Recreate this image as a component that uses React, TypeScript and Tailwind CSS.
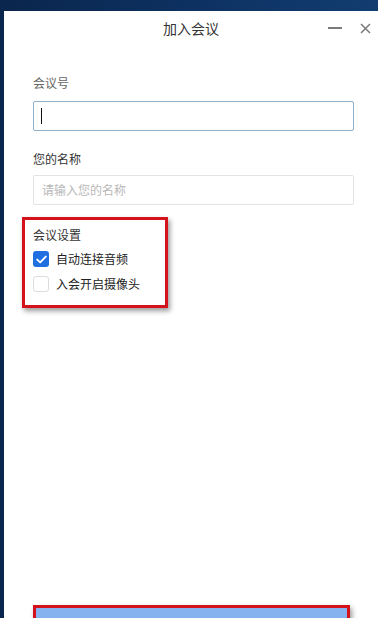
import React from "react";

const font = { fontFamily: '"Noto Sans CJK SC", "Noto Sans", sans-serif' };

function Check({ checked }: { checked: boolean }) {
  if (checked) {
    return (
      <div className="w-[16px] h-[16px] rounded-[3px] bg-[#1f6fe0] flex items-center justify-center shrink-0">
        <svg width="11" height="9" viewBox="0 0 11 9">
          <path d="M1.2 4.6 L4.2 7.4 L9.8 1.6" fill="none" stroke="#fff" strokeWidth="1.9" strokeLinecap="round" strokeLinejoin="round" />
        </svg>
      </div>
    );
  }
  return <div className="w-[16px] h-[16px] rounded-[3px] border border-[#dcdcdc] bg-white shrink-0" />;
}

export default function App() {
  return (
    <div className="w-[378px] h-[618px] overflow-hidden bg-gradient-to-r from-[#0a264d] via-[#0d3161] to-[#123d70] pt-[11px] pl-[4px]" style={font}>
      <div className="h-[607px] w-[390px] bg-white flex flex-col overflow-hidden">
        {/* title bar */}
        <div className="h-[34px] flex items-center relative shrink-0">
          <div className="w-[374px] text-center text-[14px] leading-[20px] text-[#333]">加入会议</div>
          <div className="absolute left-[324px] top-[16px] w-[14px] h-[2px] bg-[#7a7a7a]" />
          <svg className="absolute left-[356px] top-[12px]" width="11" height="11" viewBox="0 0 11 11">
            <path d="M1 1 L10 10 M10 1 L1 10" stroke="#7a7a7a" strokeWidth="1.5" />
          </svg>
        </div>

        <div className="pl-[29px] flex flex-col flex-1">
          <div className="mt-[29px] text-[12px] leading-[17px] text-[#666]">会议号</div>
          <div className="mt-[10px] w-[321px] h-[30px] border border-[#8fb0c8] rounded-[2px] flex items-center pl-[7px]">
            <div className="w-[1px] h-[16px] bg-[#111]" />
          </div>
          <div className="mt-[19px] text-[12px] leading-[17px] text-[#333]">您的名称</div>
          <div className="mt-[8px] w-[321px] h-[30px] border border-[#e3e3e3] rounded-[2px] flex items-center pl-[8px] text-[12px] text-[#b8b8b8]">
            请输入您的名称
          </div>

          <div className="mt-[12px] ml-[-11px] w-[146px] border-[3px] border-[#d3121c] shadow-[2px_3px_5px_rgba(0,0,0,0.4)] pl-[8px] pt-[6px] pb-[13px]">
            <div className="text-[12px] leading-[17px] text-[#333]">会议设置</div>
            <div className="mt-[8px] flex items-center gap-[7px] h-[16px]">
              <Check checked />
              <span className="text-[12px] text-[#222] leading-[16px]">自动连接音频</span>
            </div>
            <div className="mt-[9px] flex items-center gap-[7px] h-[16px]">
              <Check checked={false} />
              <span className="text-[12px] text-[#222] leading-[16px]">入会开启摄像头</span>
            </div>
          </div>

          <div className="mt-auto mb-[-27px] w-[317px] h-[40px] border-[3px] border-[#d3121c] bg-[#86b2ef] shadow-[2px_3px_5px_rgba(0,0,0,0.4)]" />
        </div>
      </div>
    </div>
  );
}
